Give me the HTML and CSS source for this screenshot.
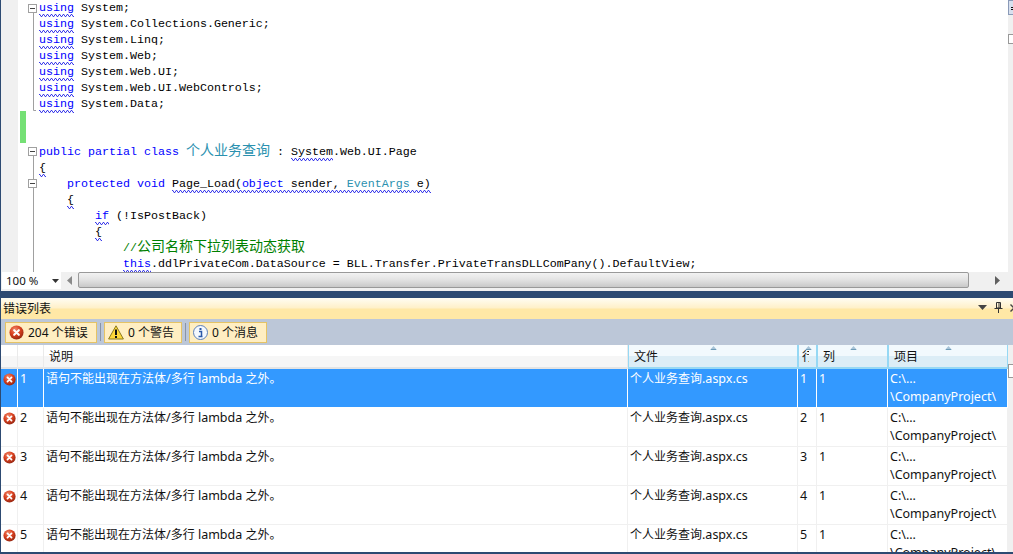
FILE: index.html
```html
<!DOCTYPE html>
<html lang="zh">
<head>
<meta charset="utf-8">
<title>错误列表</title>
<link rel="stylesheet" href="styles.css">
</head>
<body>
<svg class="defs" width="0" height="0" aria-hidden="true">
  <defs>
    <radialGradient id="redball" cx="40%" cy="30%" r="75%">
      <stop offset="0" stop-color="#f08a6c"/>
      <stop offset="0.5" stop-color="#d9401f"/>
      <stop offset="1" stop-color="#8e2410"/>
    </radialGradient>
    <symbol id="err" viewBox="0 0 16 16">
      <circle cx="8" cy="8" r="7.5" fill="url(#redball)"/>
      <path d="M5.5 5.5 10.500 10.500M10.500 5.500 5.500 10.500" stroke="#fff" stroke-width="2.200" stroke-linecap="round"/>
    </symbol>
    <symbol id="up" viewBox="0 0 7 4">
      <path d="M3.500 0 7 4H0Z" fill="#a8c4d8"/>
      <path d="M1 3.500H6" stroke="#6f9cb8" stroke-width="1"/>
    </symbol>
  </defs>
</svg>

<section class="editor">
  <div class="editor-main">
    <div class="margin"></div>
    <svg class="gutter" width="21" height="272" viewBox="0 0 21 272" aria-hidden="true">
      <rect x="2" y="111" width="6" height="32" fill="#75e075"/>
      <g fill="#fff" stroke="#a0a0a0">
        <path d="M15.500 12V110.500H18" fill="none"/>
        <path d="M15.500 155V272" fill="none"/>
        <rect x="10.500" y="4.500" width="8" height="8"/>
        <rect x="10.500" y="147.500" width="8" height="8"/>
        <rect x="10.500" y="179.500" width="8" height="8"/>
      </g>
      <path d="M12 8.500H17M12 151.500H17M12 183.500H17" stroke="#444"/>
    </svg>
    <pre class="code"><span class="kw sq">using</span> System;
<span class="kw sq">using</span> System.Collections.Generic;
<span class="kw sq">using</span> System.Linq;
<span class="kw sq">using</span> System.Web;
<span class="kw sq">using</span> System.Web.UI;
<span class="kw sq">using</span> System.Web.UI.WebControls;
<span class="kw sq">using</span> System.Data;


<span class="kw">public partial class</span> <span class="type cjk">个人业务查询</span> : <span class="sq">System</span>.Web.UI.Page
<span class="sq">{</span>
    <span class="kw">protected void</span> <span class="sq">Page_Load(<span class="kw">object</span> sender, <span class="type">EventArgs</span> e)</span>
    <span class="sq">{</span>
        <span class="kw sq">if</span> (!IsPostBack)
        <span class="sq">{</span>
            <span class="comment">//<span class="cjk">公司名称下拉列表动态获取</span></span>
            <span class="kw sq">this</span>.ddlPrivateCom.DataSource = BLL.Transfer.PrivateTransDLLComPany().DefaultView;</pre>
    <div class="vscroll">
      <div class="split-btn"><div class="split-grip"></div></div>
      <div class="vthumb"></div>
    </div>
  </div>
  <div class="hbar">
    <div class="zoom-box">100 %<svg class="zoom-arrow" width="7" height="4" viewBox="0 0 7 4"><path d="M0 0H7L3.500 4Z" fill="#333"/></svg></div>
    <svg class="arrow-left" width="6" height="9" viewBox="0 0 6 9"><path d="M5 0V9L0 4.500Z" fill="#8a8a8a"/></svg>
    <div class="hthumb"></div>
    <svg class="arrow-right" width="6" height="9" viewBox="0 0 6 9"><path d="M0 0V9L5 4.500Z" fill="#606060"/></svg>
  </div>
</section>

<section class="panel">
  <header class="panel-title">
    <span class="panel-name">错误列表</span>
    <span class="panel-tools">
      <svg width="9" height="5" viewBox="0 0 9 5"><path d="M0 0H9L4.500 5Z" fill="#444"/></svg>
      <svg width="9" height="11" viewBox="0 0 9 11"><path d="M2.500 .5H6.500V6H2.500ZM.5 6.500H8.500M4.500 7V11" fill="none" stroke="#333"/><path d="M5 1V6" stroke="#333"/></svg>
      <svg class="close" width="8" height="8" viewBox="0 0 8 8"><path d="M.5 .5 7.500 7.500M7.500 .5 .5 7.500" stroke="#444" stroke-width="1.400"/></svg>
    </span>
  </header>
  <div class="filters">
    <button class="filter"><svg class="ficon" width="15" height="15"><use href="#err"/></svg>204 个错误</button>
    <span class="sep"></span>
    <button class="filter"><svg class="ficon" width="16" height="15" viewBox="0 0 16 15"><path d="M8 .8 15.400 14H.6Z" fill="#ffd83a" stroke="#8a7a20"/><path d="M8 4.500V10" stroke="#111" stroke-width="2"/><rect x="7" y="11" width="2" height="2" fill="#111"/></svg>0 个警告</button>
    <span class="sep"></span>
    <button class="filter"><svg class="ficon" width="15" height="15" viewBox="0 0 15 15"><circle cx="7.500" cy="7.500" r="7" fill="#f4f8fe" stroke="#5b7fb8"/><rect x="6.500" y="3" width="2" height="2" fill="#2a58a8"/><path d="M6 6.500H8.500V11.500M5.500 11.500H9.500" fill="none" stroke="#2a58a8" stroke-width="1.500"/></svg>0 个消息</button>
  </div>

  <div class="table">
    <div class="row head">
      <div class="th"></div>
      <div class="th"></div>
      <div class="th name">说明</div>
      <div class="th hot name">文件<svg class="sort sort-file" width="7" height="4"><use href="#up"/></svg></div>
      <div class="th hot line-col"><span class="clip">行</span><svg class="sort sort-line" width="7" height="4"><use href="#up"/></svg></div>
      <div class="th hot name">列<svg class="sort sort-col" width="7" height="4"><use href="#up"/></svg></div>
      <div class="th hot name">项目<svg class="sort sort-proj" width="7" height="4"><use href="#up"/></svg></div>
    </div>
    <div class="rows">
      <div class="row item selected">
        <div class="td icon"><svg width="13" height="13"><use href="#err"/></svg></div>
        <div class="td">1</div>
        <div class="td"><span class="zh">语句不能出现在方法体</span>/<span class="zh">多行</span> lambda <span class="zh">之外。</span></div>
        <div class="td"><span class="zh">个人业务查询</span>.aspx.cs</div>
        <div class="td">1</div>
        <div class="td">1</div>
        <div class="td">C:\...<br>\CompanyProject\</div>
      </div>
      <div class="row item">
        <div class="td icon"><svg width="13" height="13"><use href="#err"/></svg></div>
        <div class="td">2</div>
        <div class="td"><span class="zh">语句不能出现在方法体</span>/<span class="zh">多行</span> lambda <span class="zh">之外。</span></div>
        <div class="td"><span class="zh">个人业务查询</span>.aspx.cs</div>
        <div class="td">2</div>
        <div class="td">1</div>
        <div class="td">C:\...<br>\CompanyProject\</div>
      </div>
      <div class="row item">
        <div class="td icon"><svg width="13" height="13"><use href="#err"/></svg></div>
        <div class="td">3</div>
        <div class="td"><span class="zh">语句不能出现在方法体</span>/<span class="zh">多行</span> lambda <span class="zh">之外。</span></div>
        <div class="td"><span class="zh">个人业务查询</span>.aspx.cs</div>
        <div class="td">3</div>
        <div class="td">1</div>
        <div class="td">C:\...<br>\CompanyProject\</div>
      </div>
      <div class="row item">
        <div class="td icon"><svg width="13" height="13"><use href="#err"/></svg></div>
        <div class="td">4</div>
        <div class="td"><span class="zh">语句不能出现在方法体</span>/<span class="zh">多行</span> lambda <span class="zh">之外。</span></div>
        <div class="td"><span class="zh">个人业务查询</span>.aspx.cs</div>
        <div class="td">4</div>
        <div class="td">1</div>
        <div class="td">C:\...<br>\CompanyProject\</div>
      </div>
      <div class="row item">
        <div class="td icon"><svg width="13" height="13"><use href="#err"/></svg></div>
        <div class="td">5</div>
        <div class="td"><span class="zh">语句不能出现在方法体</span>/<span class="zh">多行</span> lambda <span class="zh">之外。</span></div>
        <div class="td"><span class="zh">个人业务查询</span>.aspx.cs</div>
        <div class="td">5</div>
        <div class="td">1</div>
        <div class="td">C:\...<br>\CompanyProject\</div>
      </div>
    </div>
    <div class="list-scroll"><div class="list-thumb"></div></div>
  </div>
</section>
</body>
</html>
```
FILE: styles.css
```css
* { box-sizing: border-box; }
html, body { margin: 0; height: 554px; overflow: hidden; }
body {
  background: #2d4a72;
  padding: 0 0 2px 1px;
  display: flex;
  flex-direction: column;
  font-family: "Noto Sans", "Noto Sans CJK SC", sans-serif;
  font-size: 12px;
  color: #111;
}
.defs { position: absolute; }

.editor { height: 291px; display: flex; flex-direction: column; flex: none; background: #f0f0f0; }
.editor-main { height: 272px; display: flex; background: #fff; overflow: hidden; }
.margin { width: 17px; flex: none; background: #f0f0f0; }
.gutter { flex: none; display: block; }
.code {
  flex: 1;
  margin: 0;
  overflow: hidden;
  font-family: "Liberation Mono", "Noto Sans CJK SC", monospace;
  font-size: 11.670px;
  line-height: 16px;
  color: #000;
  white-space: pre;
}
.cjk { font-family: "Noto Sans CJK SC", sans-serif; font-size: 14px; line-height: 0; }
.kw { color: #0000ff; }
.type { color: #2b91af; }
.comment { color: #008000; }
.sq {
  padding-bottom: 2px;
  background: url("data:image/svg+xml,%3Csvg xmlns='http://www.w3.org/2000/svg' width='4' height='3'%3E%3Cpath d='M0 .5 1 .5 2 2.500 3 2.500 4 .5' fill='none' stroke='%233c3cea' stroke-width='1'/%3E%3C/svg%3E") repeat-x left bottom;
}
.vscroll { width: 5px; flex: none; background: #f0f0f0; display: flex; flex-direction: column; }
.split-btn { height: 15px; margin-bottom: 18px; padding: 6px 0 0 2px; background: #d8e0ee; border: 1px solid #8a9ab8; border-right: 0; }
.split-grip { height: 3px; border-top: 1px solid #111; border-bottom: 1px solid #111; }
.vthumb { height: 10px; margin-top: 1px; background: #fff; border: 1px solid #999; border-right: 0; }

.hbar { height: 18px; display: flex; align-items: flex-start; background: #f0f0f0; }
.zoom-box {
  width: 59px;
  height: 17px;
  margin-left: 1px;
  background: #fff;
  display: flex;
  align-items: center;
  justify-content: space-between;
  padding: 0 2px 0 4px;
  font-family: "Noto Sans", sans-serif;
  font-size: 11.500px;
}
.arrow-left { margin: 4px 0 0 6px; flex: none; }
.hthumb {
  width: 891px;
  height: 16px;
  margin-left: 5px;
  flex: none;
  border: 1px solid #999;
  border-radius: 2px;
  background: linear-gradient(#f2f2f2, #e4e4e4 45%, #c8c8c8);
}
.arrow-right { margin: 4px 0 0 26px; flex: none; }

.panel { margin-top: 7px; flex: 1; min-height: 0; display: flex; flex-direction: column; background: #fff; }
.panel-title {
  height: 21px;
  flex: none;
  display: flex;
  align-items: center;
  justify-content: space-between;
  padding: 0 0 2px 2px;
  background: linear-gradient(#fffdf3, #fff0c8 48%, #ffe8a6 52%, #ffe8a6);
}
.panel-name { font-size: 12px; }
.panel-tools { display: flex; align-items: center; gap: 7px; margin-right: -5px; }
.filters {
  height: 26px;
  flex: none;
  display: flex;
  align-items: center;
  padding: 0 0 0 4px;
  background: #bcc7d8;
}
.filter {
  height: 21px;
  width: 92px;
  padding: 0 0 0 3px;
  display: flex;
  align-items: center;
  gap: 4px;
  background: #ffeec2;
  border: 1px solid #e5c365;
  font: inherit;
  color: #111;
}
.filter + .sep + .filter { width: 78px; }
.ficon { flex: none; }
.sep { width: 1px; height: 18px; margin: 0 3px; background: #8a94a6; }

.table { position: relative; flex: 1; min-height: 0; display: flex; flex-direction: column; padding-right: 5px; }
.row { display: grid; grid-template-columns: 17px 26px 584px 170px 19px 71px 120px; flex: none; }
.head { height: 24px; }
.th {
  position: relative;
  overflow: hidden;
  padding-top: 3px;
  line-height: 18px;
  background: linear-gradient(#fff 48%, #f6f6f6 52%);
  border-right: 1px solid #eaeaea;
  border-bottom: 2px solid #e4e4e4;
}
.th.name { padding-left: 5px; }
.th.hot {
  background: linear-gradient(#f2f9fd 48%, #dcedf6 52%);
  border: 1px solid #96d8f4;
  border-top: 0;
  border-bottom-width: 2px;
}
.th.line-col { padding-left: 3px; }
.clip { display: block; width: 7px; overflow: hidden; }
.sort { position: absolute; top: 1px; }
.sort-file { left: 81px; }
.sort-line { left: 6px; }
.sort-col { left: 32px; }
.sort-proj { left: 56px; }
.rows { flex: 1; min-height: 0; overflow: hidden; }
.item { height: 39px; border-bottom: 1px solid #f0f0f0; }
.td {
  padding: 1px 0 0 2px;
  line-height: 17.500px;
  font-size: 12.500px;
  white-space: nowrap;
  overflow: hidden;
  border-right: 1px solid #f0f0f0;
}
.zh { font-size: 12px; }
.td.icon { padding: 4px 0 0 2px; line-height: 0; }
.selected { background: #3399ff; color: #fff; border-bottom-color: #fff; }
.selected .td { border-right-color: #fff; }
.list-scroll { position: absolute; top: 0; right: 0; bottom: 0; width: 5px; background: #f0f0f0; }
.list-thumb { height: 14px; margin-top: 19px; background: #fff; border: 1px solid #999; border-right: 0; }
```
